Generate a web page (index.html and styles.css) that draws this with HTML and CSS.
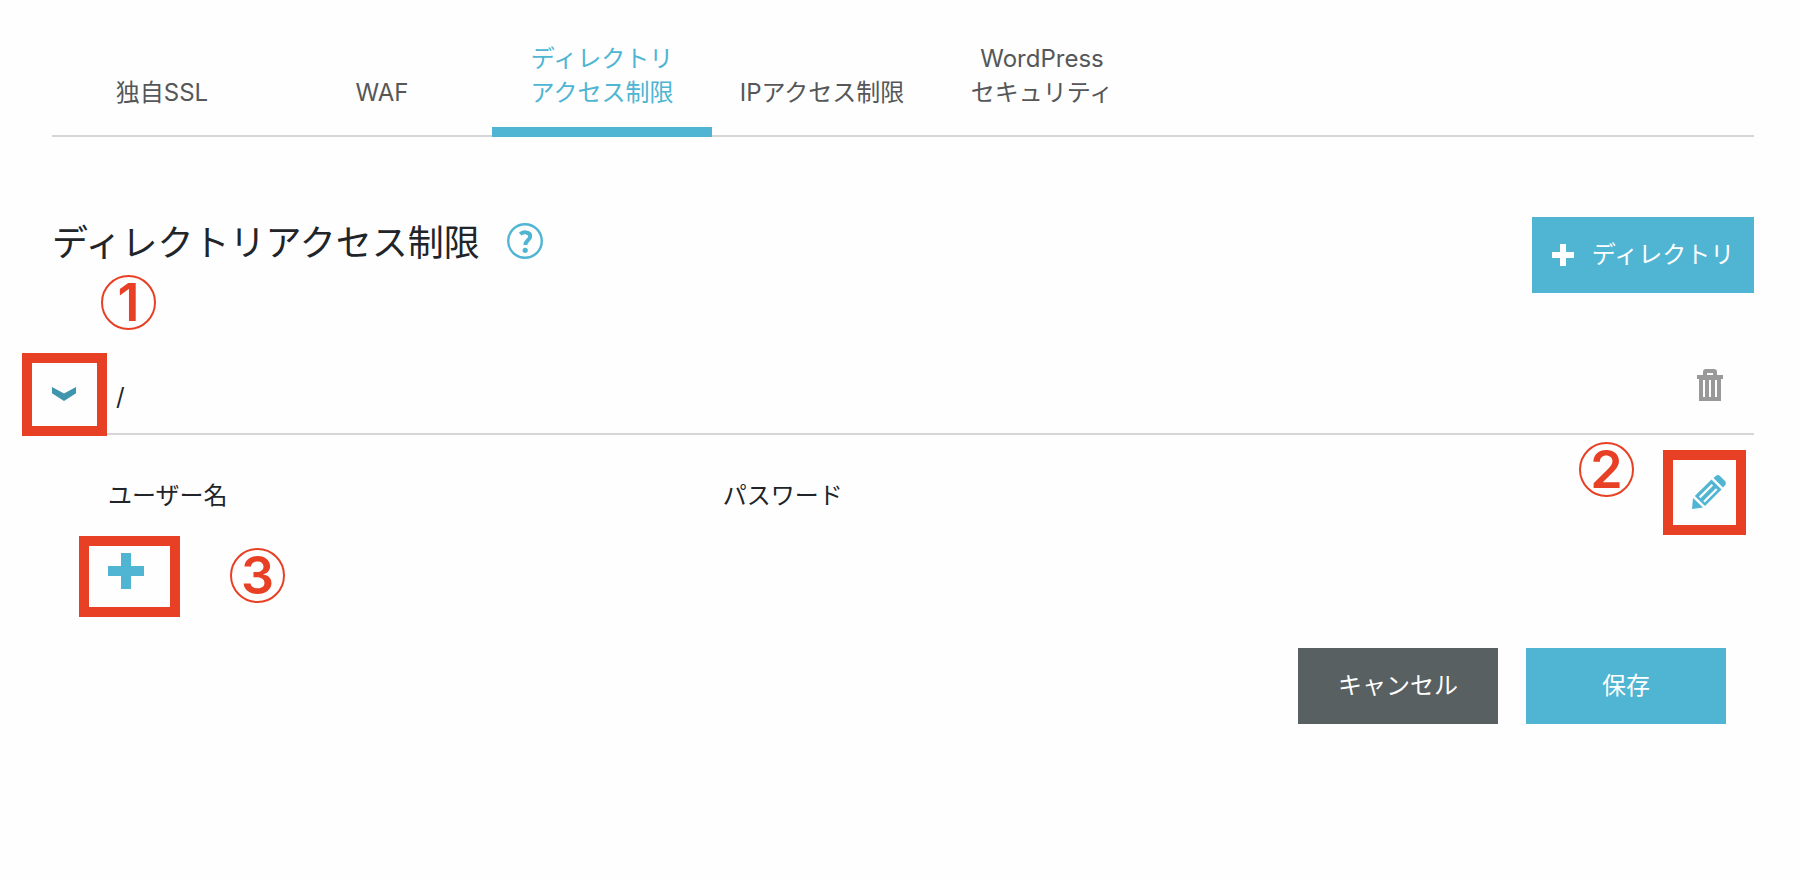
FILE: index.html
```html
<!DOCTYPE html>
<html lang="ja">
<head>
<meta charset="utf-8">
<title>ディレクトリアクセス制限</title>
<link rel="stylesheet" href="styles.css">
</head>
<body>
<div class="page">
  <nav class="tabs">
    <a class="tab" href="#ssl">独自SSL</a>
    <a class="tab" href="#waf">WAF</a>
    <a class="tab tab-active" href="#directory" aria-current="page"><span>ディレクトリ</span><span>アクセス制限</span></a>
    <a class="tab" href="#ip">IPアクセス制限</a>
    <a class="tab" href="#wordpress"><span>WordPress</span><span>セキュリティ</span></a>
  </nav>

  <main>
    <header class="heading">
      <h1 class="title">ディレクトリアクセス制限</h1>
      <button class="icon-button" type="button" aria-label="ヘルプ">
        <svg width="36" height="36" viewBox="0 0 36 36" fill="none" stroke="currentColor">
          <circle cx="18" cy="18" r="16.8" stroke-width="2.4"/>
          <path d="M13.2 11.2C14.8 9.6 17 9 19.2 9.4C22 9.8 23.4 11.6 23.2 13.6C22.9 17 18.6 17.2 18.3 22" stroke-width="4"/>
          <circle cx="18.2" cy="27.3" r="2.6" fill="currentColor" stroke="none"/>
        </svg>
      </button>
      <button class="button button-add" type="button">
        <svg width="22" height="22" viewBox="0 0 22 22" fill="currentColor"><path d="M8 0h6v8h8v6h-8v8H8v-8H0V8h8z"/></svg>
        ディレクトリ
      </button>
    </header>

    <section class="directory">
      <div class="directory-row">
        <button class="icon-button toggle" type="button" aria-label="開閉">
          <svg width="24" height="14" viewBox="0 0 24 14" fill="currentColor"><path d="M0 0L12 6.6L24 0V6.2L12 14L0 6.2z"/></svg>
          <span class="frame frame-toggle"></span>
          <span class="mark mark-toggle">1</span>
        </button>
        <span class="path">/</span>
        <button class="icon-button trash" type="button" aria-label="削除">
          <svg width="26" height="32" viewBox="0 0 26 32" fill="currentColor" fill-rule="evenodd"><path d="M6 6V3Q6 0 9 0H17Q20 0 20 3V6H26V10H24V32H2V10H0V6zM10 6H16V4H10zM6 11V28H8V11zM12 11V28H14V11zM18 11V28H20V11z"/></svg>
        </button>
      </div>

      <div class="users">
        <table class="user-table">
          <tr>
            <th class="col-name" scope="col">ユーザー名</th>
            <th scope="col">パスワード</th>
            <td class="col-edit">
              <button class="icon-button" type="button" aria-label="編集">
                <svg width="34" height="34" viewBox="0 0 34 34" fill="currentColor" fill-rule="evenodd"><path d="M0 34L1 23L11 32.5zM2.8 21L19.5 4.5L29.5 14.5L13 31zM6.9 21.6L8.5 23.2L21.2 10.5L19.6 8.9zM11.2 25.9L12.8 27.5L25.5 14.8L23.9 13.2zM21.5 3L24 .8Q26 -.7 28 1L33 6Q34.6 8 33.2 10L31 12.5z"/></svg>
                <span class="frame frame-edit"></span>
                <span class="mark mark-edit">2</span>
              </button>
            </td>
          </tr>
        </table>
        <button class="icon-button" type="button" aria-label="ユーザー追加">
          <svg width="36" height="36" viewBox="0 0 36 36" fill="currentColor"><path d="M13 0h10v13h13v10H23v13H13V23H0V13h13z"/></svg>
          <span class="frame frame-add"></span>
          <span class="mark mark-add">3</span>
        </button>
        <div class="actions">
          <button class="button button-cancel" type="button">キャンセル</button>
          <button class="button" type="submit">保存</button>
        </div>
      </div>
    </section>
  </main>
</div>
</body>
</html>
```
FILE: styles.css
```css
* {
  box-sizing: border-box;
}

body {
  margin: 0;
  background: #fefefe;
  color: #212529;
  font: 24px/34px Inter, "Noto Sans CJK JP", sans-serif;
}

svg {
  display: block;
}

.page {
  padding: 0 46px 0 52px;
}

.tabs {
  display: flex;
  align-items: stretch;
  border-bottom: 2px solid #d6d6d6;
  padding-top: 42px;
}

.tab {
  display: flex;
  flex-direction: column;
  justify-content: flex-end;
  width: 220px;
  margin-bottom: -2px;
  padding-bottom: 17px;
  border-bottom: 10px solid transparent;
  color: #555758;
  text-align: center;
  text-decoration: none;
}

.tab-active {
  border-bottom-color: #4fb5d3;
  color: #4fb5d3;
}

.heading {
  display: flex;
  align-items: flex-start;
  gap: 27px;
  padding-top: 80px;
}

.title {
  margin: 0;
  font-size: 36px;
  font-weight: 400;
  line-height: 52px;
}

.icon-button {
  position: relative;
  padding: 0;
  border: 0;
  background: none;
  color: #4fb5d3;
}

.heading .icon-button {
  margin-top: 6px;
}

.button {
  display: flex;
  align-items: center;
  justify-content: center;
  width: 200px;
  height: 76px;
  padding: 0;
  border: 0;
  background: #4fb5d3;
  color: #fff;
  font: inherit;
}

.button-add {
  gap: 18px;
  width: 222px;
  margin-left: auto;
}

.button-cancel {
  background: #586061;
}

.directory {
  padding-top: 60px;
}

.directory-row {
  display: flex;
  align-items: center;
  height: 82px;
  padding-top: 2px;
  border-bottom: 2px solid #d6d6d6;
}

.toggle {
  color: #3f94ae;
}

.path {
  margin-left: 40px;
  padding-top: 6px;
}

.trash {
  margin: 0 31px 18px auto;
  color: #999;
}

.users {
  padding: 40px 28px 0 56px;
}

.user-table {
  width: 100%;
  margin-bottom: 40px;
  border-collapse: collapse;
}

.user-table th,
.user-table td {
  padding: 0;
  font-weight: 400;
  text-align: left;
  vertical-align: top;
}

.user-table th {
  padding-top: 4px;
}

.user-table .col-name {
  width: 38%;
}

.col-edit .icon-button {
  display: block;
  margin-left: auto;
}

.actions {
  display: flex;
  justify-content: flex-end;
  gap: 28px;
  padding-top: 50px;
}

/* Guide frames and step numbers laid over the controls */
.frame {
  position: absolute;
  border: 10px solid #e84025;
}

.frame-toggle {
  top: -34px;
  left: -30px;
  width: 85px;
  height: 83px;
}

.frame-edit {
  top: -25px;
  left: -29px;
  width: 83px;
  height: 85px;
}

.frame-add {
  top: -17px;
  left: -29px;
  width: 101px;
  height: 81px;
}

.mark {
  position: absolute;
  width: 55px;
  height: 55px;
  border: 2px solid #e84025;
  border-radius: 50%;
  color: #e84025;
  font: 600 52px/51px Inter, sans-serif;
  text-align: center;
}

.mark-toggle {
  top: -112px;
  left: 49px;
}

.mark-edit {
  top: -33px;
  left: -113px;
}

.mark-add {
  top: -5px;
  left: 122px;
}
```
